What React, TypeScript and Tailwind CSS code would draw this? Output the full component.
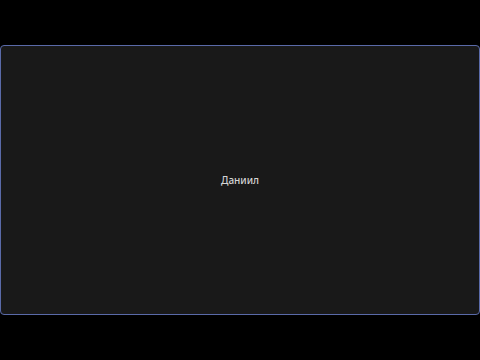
export default function App() {
  return (
    <div className="w-[480px] h-[360px] bg-black flex items-center justify-center">
      <div className="w-[480px] h-[270px] rounded-[4px] border border-[#5a6aa8] bg-[#191919] flex items-center justify-center">
        <span className="text-[10px] font-medium text-[#d4d4d4]" style={{ fontFamily: '"Noto Sans", "DejaVu Sans", sans-serif' }}>
          Даниил
        </span>
      </div>
    </div>
  );
}
